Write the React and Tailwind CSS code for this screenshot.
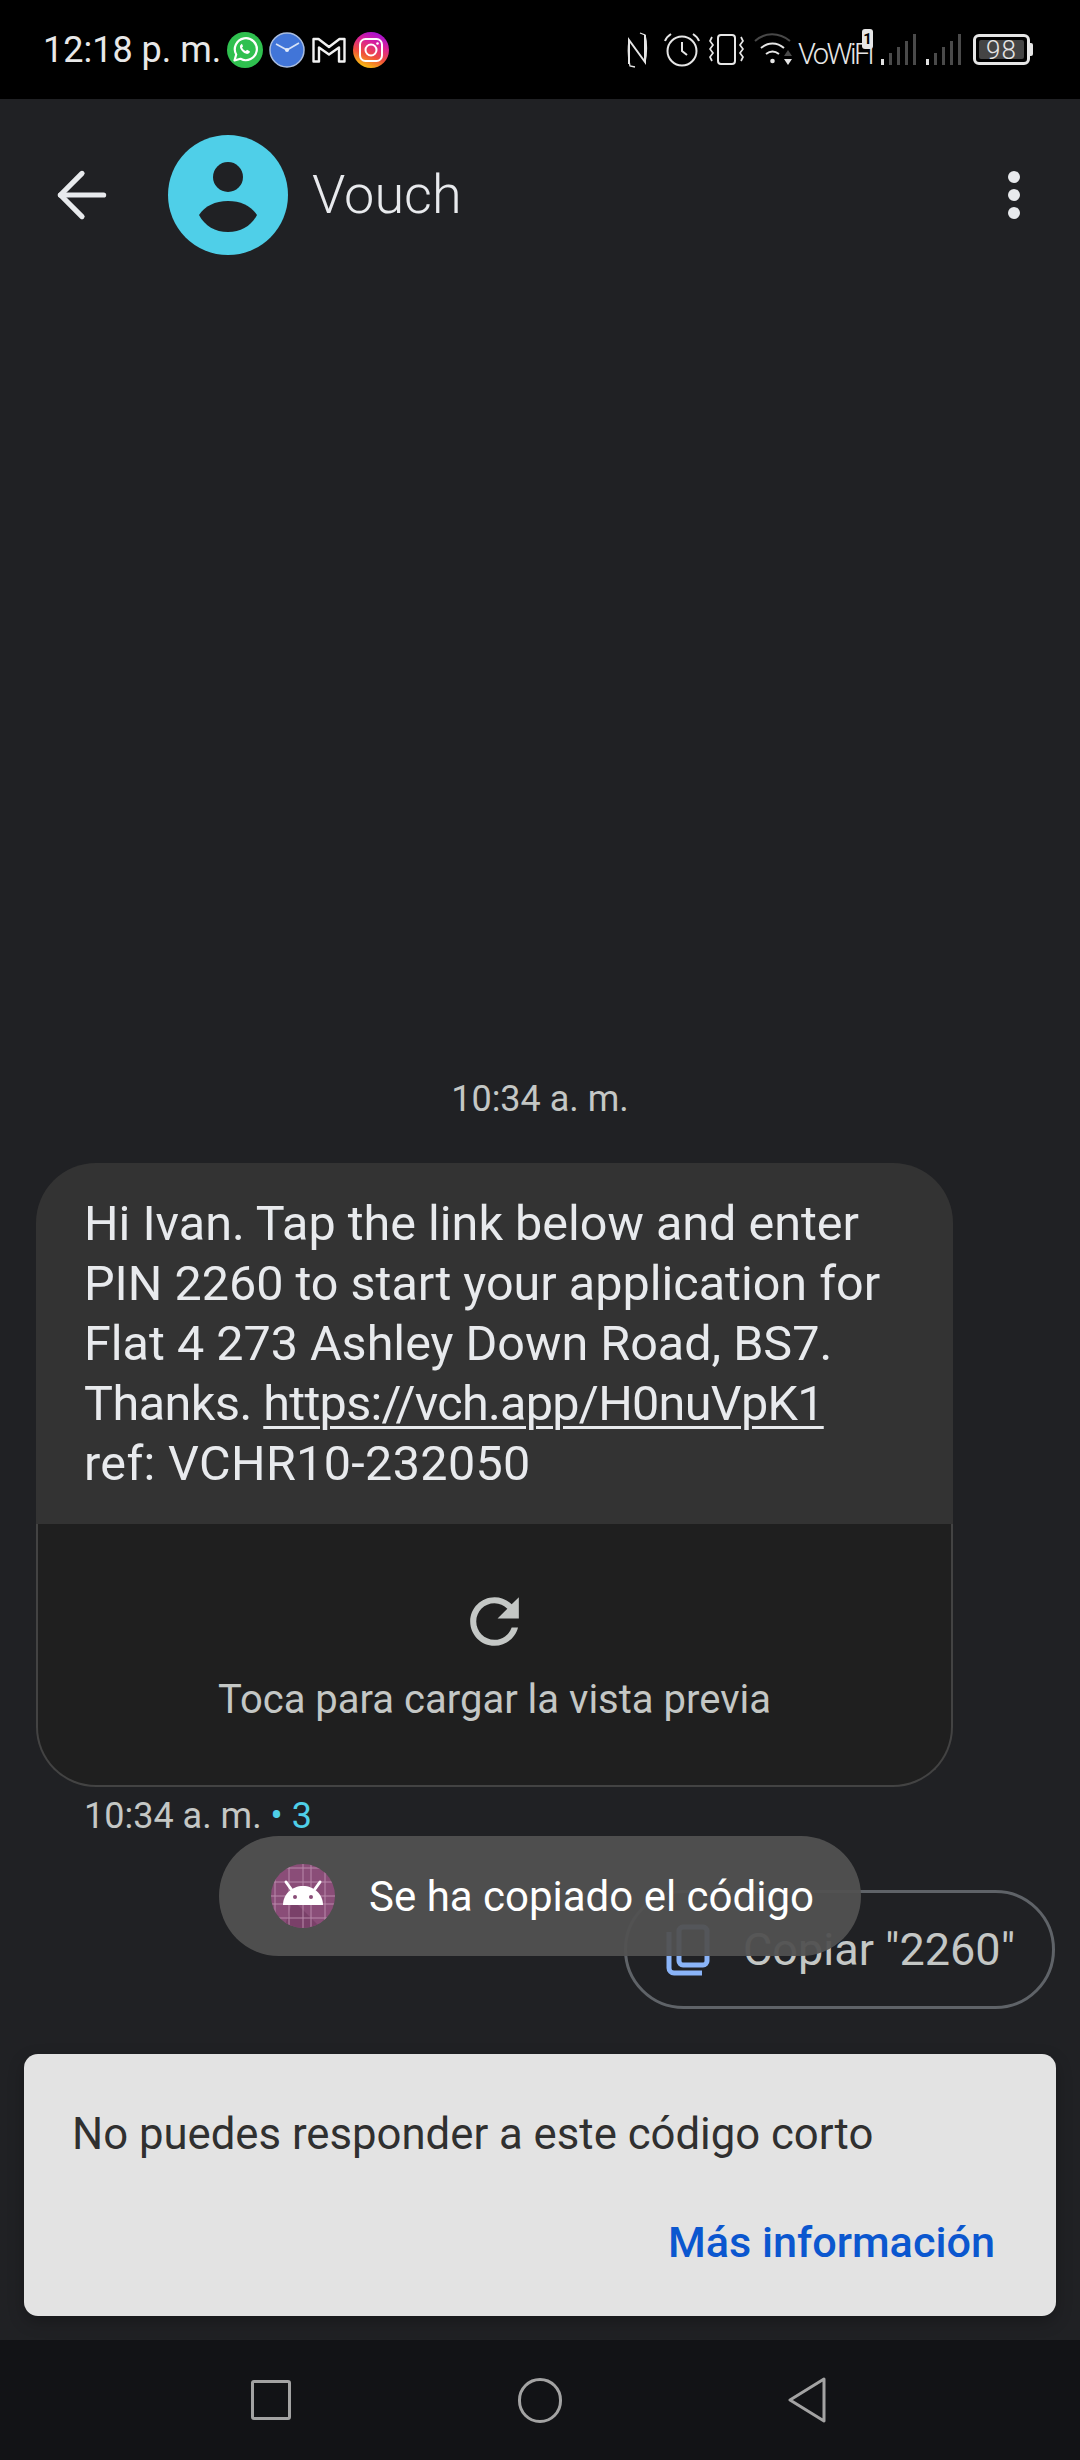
import { ArrowLeft } from "lucide-react";

const MESSAGE_LINES = [
  "Hi Ivan. Tap the link below and enter",
  "PIN 2260 to start your application for",
  "Flat 4 273 Ashley Down Road, BS7.",
];

function WhatsappIcon() {
  return (
    <svg width="36" height="36" viewBox="0 0 36 36">
      <circle cx="18" cy="18" r="18" fill="#2fc04f" />
      <path d="M7.500 28.500l1.700-6a11 11 0 1 1 4.300 4.300z" fill="none" stroke="#fff" strokeWidth="2.200" strokeLinejoin="round" />
      <path d="M14 12.500c-1.600 1.200-1.400 3.400.4 5.800 2 2.600 4.600 4 6.600 3.500 1.400-.4 2-1.600 1.800-2.500l-2.800-1.500-1.200 1.300c-1.500-.5-3-2-3.700-3.600l1-1.200-1.200-2.600z" fill="#fff" />
    </svg>
  );
}

function ClockIcon() {
  return (
    <svg width="36" height="36" viewBox="0 0 36 36" className="ml-[6px]">
      <circle cx="18" cy="18" r="17" fill="#4175d8" stroke="#a9bde0" strokeWidth="1.500" />
      <path d="M7 12l11 6 12-7" fill="none" stroke="#d6e2f7" strokeWidth="1.700" />
      <circle cx="18" cy="18" r="2" fill="#e4ecfa" />
    </svg>
  );
}

function GmailIcon() {
  return (
    <svg width="34" height="27" viewBox="0 0 34 27" className="ml-[7px]">
      <path d="M1.500 3h5l10.500 8 10.500-8h5v22.500h-5.500V11.500L17 18.500 7 11.500v14H1.500z" fill="none" stroke="#f1f1f1" strokeWidth="2.400" strokeLinejoin="round" />
    </svg>
  );
}

function InstagramIcon() {
  return (
    <svg width="36" height="36" viewBox="0 0 36 36" className="ml-[7px]">
      <defs>
        <linearGradient id="ig" x1="0.300" y1="1" x2="0.700" y2="0">
          <stop offset="0" stopColor="#f9c80e" />
          <stop offset="0.350" stopColor="#f0503a" />
          <stop offset="0.700" stopColor="#d81f9c" />
          <stop offset="1" stopColor="#a010d8" />
        </linearGradient>
      </defs>
      <circle cx="18" cy="18" r="18" fill="url(#ig)" />
      <rect x="7" y="7" width="22" height="22" rx="5.500" fill="none" stroke="#fff" strokeWidth="2" />
      <circle cx="18" cy="18" r="5.500" fill="none" stroke="#fff" strokeWidth="2" />
      <circle cx="24.500" cy="11.500" r="1.300" fill="#fff" />
    </svg>
  );
}

function SignalBars() {
  const bars = [[0, 25], [8, 19], [16, 13], [24, 7], [32, 0]];
  return (
    <svg width="36" height="32" viewBox="0 0 36 32">
      {bars.map(([x, y], i) => (
        <rect key={x} x={x} y={y} width="3" height={31 - y} fill={i === 0 ? "#e0e0e0" : "#4a4a4a"} />
      ))}
    </svg>
  );
}

function StatusRight() {
  return (
    <div className="flex items-center pr-[50px] text-[#e6e6e6]">
      <svg width="21" height="36" viewBox="0 0 21 36" fill="none" stroke="#e6e6e6" strokeWidth="2">
        <path d="M2 32V8l16 22V3" />
        <path d="M2 8c-1 8-1 18 1 26l5 1M18 30c2-8 2-20 0-27l-5-2" strokeWidth="1.300" />
      </svg>
      <svg width="36" height="35" viewBox="0 0 36 35" fill="none" stroke="#e6e6e6" strokeWidth="2" className="ml-[16px]">
        <circle cx="18" cy="19" r="14.500" />
        <path d="M18 10v9l5 4" />
        <path d="M1 9c1-3 3-5 6-7M35 9c-1-3-3-5-6-7" />
      </svg>
      <svg width="35" height="31" viewBox="0 0 35 31" fill="none" stroke="#e6e6e6" strokeWidth="2" className="ml-[9px]">
        <rect x="9" y="1" width="17" height="29" rx="3" />
        <path d="M3 3l-2 4 3 4-3 4 3 4-3 4 2 4M32 3l2 4-3 4 3 4-3 4 3 4-2 4" strokeWidth="1.700" />
      </svg>
      <svg width="40" height="33" viewBox="0 0 40 33" fill="none" className="ml-[10px]">
        <path d="M1 8c10-9 24-9 35 0" stroke="#484848" strokeWidth="2" />
        <path d="M7 15c7-6 16-6 23 0" stroke="#e6e6e6" strokeWidth="2" />
        <path d="M12 21c4-3 9-3 13 0" stroke="#e6e6e6" strokeWidth="2" />
        <circle cx="18.500" cy="28" r="2.300" fill="#e6e6e6" />
        <path d="M34 17l-4 6h8z" fill="#4a4a4a" />
        <path d="M30 26h8l-4 6z" fill="#e6e6e6" />
      </svg>
      <div className="relative ml-[4px] w-[75px] h-[32px]">
        <span className="block text-[29px] leading-[32px] mt-[4px] tracking-[-2.500px] font-light whitespace-nowrap">VoWiFi</span>
        <span className="absolute right-0 top-[-5px] w-[11px] h-[20px] rounded-[3px] bg-[#e6e6e6] text-black text-[15px] leading-[20px] font-bold text-center">1</span>
      </div>
      <div className="ml-[8px]">
        <SignalBars />
      </div>
      <div className="ml-[9px]">
        <SignalBars />
      </div>
      <div className="relative ml-[11px] w-[57px] h-[31px] rounded-[6px] border-[3px] border-[#e6e6e6] p-[3px]">
        <div className="w-full h-full rounded-[2px] bg-[#444] flex items-center justify-center text-[26px] leading-none font-light tracking-[1px] text-[#e6e6e6]">98</div>
        <span className="absolute right-[-6px] top-[6px] w-[3px] h-[13px] bg-[#e6e6e6] rounded-r-[2px]" />
      </div>
    </div>
  );
}

function AndroidBadge() {
  return (
    <svg width="64" height="64" viewBox="0 0 64 64" className="shrink-0">
      <defs>
        <clipPath id="badge">
          <circle cx="32" cy="32" r="32" />
        </clipPath>
      </defs>
      <g clipPath="url(#badge)">
        <rect width="64" height="64" fill="#8a4d78" />
        <path d="M22 36l32 32H12z" fill="#7a4069" />
        {[0, 14, 28, 36, 50].map((x) => (
          <path key={x} d={`M${x + 4} 0v64M0 ${x + 4}h64`} stroke="#b98aab" strokeWidth="1" />
        ))}
      </g>
      <path d="M12 41c0-11 9-19 20-19s20 8 20 19z" fill="#fff" />
      <path d="M20 25l-5-7M44 25l5-7" stroke="#fff" strokeWidth="3" strokeLinecap="round" />
      <circle cx="24" cy="33" r="2" fill="#8a4d78" />
      <circle cx="40" cy="33" r="2" fill="#8a4d78" />
    </svg>
  );
}

export default function App() {
  return (
    <div className="relative w-[1080px] h-[2460px] flex flex-col bg-[#202124] overflow-hidden font-['Roboto',sans-serif]">
      <div className="h-[99px] shrink-0 bg-black flex items-center justify-between">
        <div className="flex items-center pl-[43px]">
          <span className="w-[184px] text-[36px] leading-none text-[#e8e8e8] whitespace-nowrap">12:18 p. m.</span>
          <WhatsappIcon />
          <ClockIcon />
          <GmailIcon />
          <InstagramIcon />
        </div>
        <StatusRight />
      </div>

      <div className="h-[192px] shrink-0 flex items-center pl-[45px] pr-[60px]">
        <ArrowLeft size={74} strokeWidth={1.700} className="text-[#e8eaed]" />
        <div className="ml-[49px] w-[120px] h-[120px] rounded-full bg-[#4fcfe8] flex items-center justify-center">
          <svg width="60" height="72" viewBox="0 0 60 72" fill="#202124" className="mt-[6px]">
            <circle cx="30" cy="15" r="15" />
            <path d="M1 53c6-9 16-14 29-14s23 5 29 14c-6 11-16 17-29 17S7 64 1 53z" />
          </svg>
        </div>
        <span className="ml-[24px] text-[54px] leading-none font-light text-[#e8eaed]">Vouch</span>
        <div className="ml-auto flex flex-col gap-[6px]">
          <span className="w-[12px] h-[12px] rounded-full bg-[#e8eaed]" />
          <span className="w-[12px] h-[12px] rounded-full bg-[#e8eaed]" />
          <span className="w-[12px] h-[12px] rounded-full bg-[#e8eaed]" />
        </div>
      </div>

      <main className="flex-1 flex flex-col justify-end">
        <div className="text-center text-[36px] leading-[44px] text-[#c4c7c5] mb-[42px]">10:34 a. m.</div>

        <div className="ml-[36px] w-[917px] rounded-t-[60px] bg-[#333333] pl-[48px] pt-[31px] pb-[30px] text-[48.500px] leading-[60px] text-[#e8eaed]">
          {MESSAGE_LINES.map((line) => (
            <div key={line} className="whitespace-nowrap">{line}</div>
          ))}
          <div className="whitespace-nowrap">
            <span className="tracking-[-0.500px]">Thanks. </span>
            <span className="underline underline-offset-[6px] decoration-[3px] tracking-[-0.700px]">https://vch.app/H0nuVpK1</span>
          </div>
          <div className="whitespace-nowrap tracking-[0.350px]">ref: VCHR10-232050</div>
        </div>
        <div className="ml-[36px] w-[917px] h-[263px] rounded-b-[60px] bg-[#1f1f1f] border-x-2 border-b-2 border-[#434343] flex flex-col items-center pt-[61px]">
          <svg width="73" height="73" viewBox="0 0 24 24" fill="#c4c7c5">
            <path d="M17.650 6.350A7.958 7.958 0 0 0 12 4c-4.420 0-7.990 3.580-7.990 8s3.570 8 7.990 8c3.730 0 6.840-2.550 7.730-6h-2.080A5.990 5.990 0 0 1 12 18c-3.310 0-6-2.690-6-6s2.690-6 6-6c1.660 0 3.140.690 4.220 1.780L13 11h7V4l-2.350 2.350z" />
          </svg>
          <div className="mt-[19px] text-[40px] leading-[46px] text-[#c4c7c5] whitespace-nowrap">Toca para cargar la vista previa</div>
        </div>

        <div className="ml-[84px] mt-[7px] text-[36px] leading-[44px] text-[#c4c7c5] whitespace-nowrap">
          10:34 a. m. <span className="text-[#4fcfe8]">• 3</span>
        </div>

        <div className="self-end mr-[25px] mt-[52px] mb-[45px] w-[431px] h-[119px] rounded-full border-[3px] border-[#5f6368] flex items-center pl-[39px]">
          <svg width="44" height="52" viewBox="0 0 44 52" fill="none" stroke="#8ab4f8" strokeWidth="5">
            <path d="M3 8v36a5 5 0 0 0 5 5h28" />
            <rect x="13" y="3" width="28" height="38" rx="4" />
          </svg>
          <span className="ml-[33px] text-[45px] leading-none text-[#c4c7c5] whitespace-nowrap">Copiar "2260"</span>
        </div>

        <div className="mx-[24px] mb-[24px] h-[262px] rounded-[14px] bg-[#e3e3e3] pt-[54px] pl-[48px] pr-[61px] shadow-[0_6px_16px_rgba(0,0,0,0.25)]">
          <div className="text-[43.700px] leading-[52px] text-[#303030] whitespace-nowrap">No puedes responder a este código corto</div>
          <div className="mt-[57px] text-right text-[43.200px] leading-[52px] font-medium text-[#0b57cf] whitespace-nowrap">Más información</div>
        </div>
      </main>

      <nav className="h-[120px] shrink-0 bg-[#121316] flex items-center justify-center pr-[3px]">
        <span className="w-[40px] h-[40px] rounded-[3px] border-[3px] border-[#a3a3a3]" />
        <span className="ml-[227px] w-[44px] h-[45px] rounded-full border-[3px] border-[#a3a3a3]" />
        <svg width="38" height="46" viewBox="0 0 38 46" fill="none" stroke="#a3a3a3" strokeWidth="3" strokeLinejoin="round" className="ml-[226px]">
          <path d="M36 2L2 23l34 21z" />
        </svg>
      </nav>

      <div className="absolute left-[219px] top-[1836px] w-[642px] h-[120px] rounded-full bg-[#515151]/95 flex items-center pl-[52px]">
        <AndroidBadge />
        <span className="ml-[34px] mt-[2px] text-[42px] leading-none text-white whitespace-nowrap">Se ha copiado el código</span>
      </div>
    </div>
  );
}
